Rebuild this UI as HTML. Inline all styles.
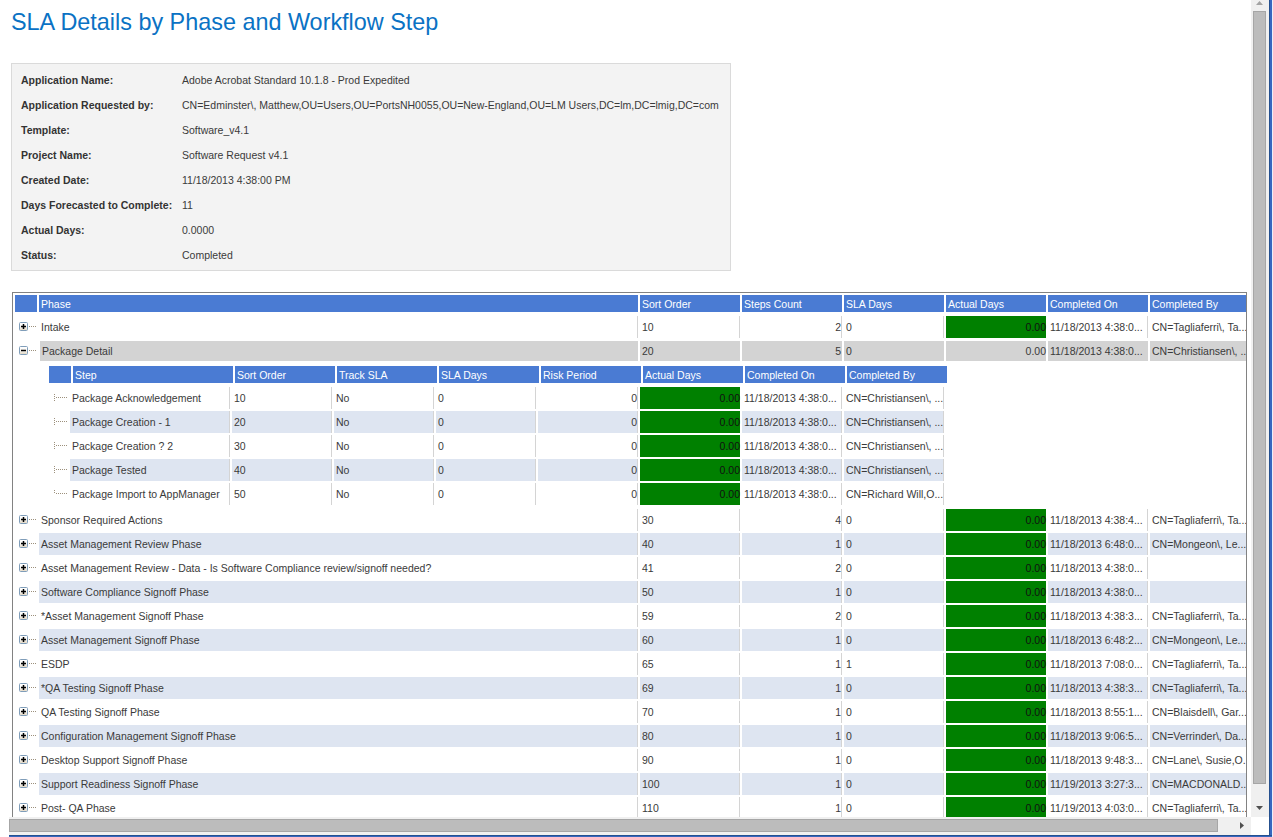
<!DOCTYPE html>
<html><head><meta charset="utf-8"><style>
html,body{margin:0;padding:0;}
body{width:1273px;height:837px;overflow:hidden;position:relative;background:#fff;font-family:'Liberation Sans',sans-serif;}
div{position:absolute;box-sizing:content-box;}
.t{white-space:nowrap;}
</style></head><body>
<div class="t" style="left:11px;top:2px;line-height:40px;font-size:23.4px;color:#0a72c4;">SLA Details by Phase and Workflow Step</div><div style="left:11px;top:63px;width:718px;height:206px;background:#f3f3f3;border:1px solid #dadada;"></div><div class="t" style="left:21px;top:70px;line-height:20px;font-size:10.5px;color:#333333;font-weight:700;">Application Name:</div><div class="t" style="left:182px;top:70px;line-height:20px;font-size:10.5px;color:#3a3a3a;">Adobe Acrobat Standard 10.1.8 - Prod Expedited</div><div class="t" style="left:21px;top:95px;line-height:20px;font-size:10.5px;color:#333333;font-weight:700;">Application Requested by:</div><div class="t" style="left:182px;top:95px;line-height:20px;font-size:10.5px;color:#3a3a3a;">CN=Edminster\, Matthew,OU=Users,OU=PortsNH0055,OU=New-England,OU=LM Users,DC=lm,DC=lmig,DC=com</div><div class="t" style="left:21px;top:120px;line-height:20px;font-size:10.5px;color:#333333;font-weight:700;">Template:</div><div class="t" style="left:182px;top:120px;line-height:20px;font-size:10.5px;color:#3a3a3a;">Software_v4.1</div><div class="t" style="left:21px;top:145px;line-height:20px;font-size:10.5px;color:#333333;font-weight:700;">Project Name:</div><div class="t" style="left:182px;top:145px;line-height:20px;font-size:10.5px;color:#3a3a3a;">Software Request v4.1</div><div class="t" style="left:21px;top:170px;line-height:20px;font-size:10.5px;color:#333333;font-weight:700;">Created Date:</div><div class="t" style="left:182px;top:170px;line-height:20px;font-size:10.5px;color:#3a3a3a;">11/18/2013 4:38:00 PM</div><div class="t" style="left:21px;top:195px;line-height:20px;font-size:10.5px;color:#333333;font-weight:700;">Days Forecasted to Complete:</div><div class="t" style="left:182px;top:195px;line-height:20px;font-size:10.5px;color:#3a3a3a;">11</div><div class="t" style="left:21px;top:220px;line-height:20px;font-size:10.5px;color:#333333;font-weight:700;">Actual Days:</div><div class="t" style="left:182px;top:220px;line-height:20px;font-size:10.5px;color:#3a3a3a;">0.0000</div><div class="t" style="left:21px;top:245px;line-height:20px;font-size:10.5px;color:#333333;font-weight:700;">Status:</div><div class="t" style="left:182px;top:245px;line-height:20px;font-size:10.5px;color:#3a3a3a;">Completed</div><div style="left:12px;top:292px;width:1235px;height:1px;background:#828282;"></div><div style="left:12px;top:292px;width:1px;height:525px;background:#828282;"></div><div style="left:1246px;top:292px;width:1px;height:525px;background:#828282;"></div><div style="left:13px;top:293px;width:1233px;height:524px;overflow:hidden;"><div style="left:-13px;top:-293px;width:1400px;height:1200px;"><div style="left:15px;top:295px;width:22px;height:17px;background:#4a7bd3;"></div><div style="left:39px;top:295px;width:599px;height:17px;background:#4a7bd3;"></div><div class="t" style="left:41px;top:294px;line-height:20px;font-size:10.5px;color:#fff;">Phase</div><div style="left:640px;top:295px;width:100px;height:17px;background:#4a7bd3;"></div><div class="t" style="left:642px;top:294px;line-height:20px;font-size:10.5px;color:#fff;">Sort Order</div><div style="left:742px;top:295px;width:100px;height:17px;background:#4a7bd3;"></div><div class="t" style="left:744px;top:294px;line-height:20px;font-size:10.5px;color:#fff;">Steps Count</div><div style="left:844px;top:295px;width:100px;height:17px;background:#4a7bd3;"></div><div class="t" style="left:846px;top:294px;line-height:20px;font-size:10.5px;color:#fff;">SLA Days</div><div style="left:946px;top:295px;width:100px;height:17px;background:#4a7bd3;"></div><div class="t" style="left:948px;top:294px;line-height:20px;font-size:10.5px;color:#fff;">Actual Days</div><div style="left:1048px;top:295px;width:100px;height:17px;background:#4a7bd3;"></div><div class="t" style="left:1050px;top:294px;line-height:20px;font-size:10.5px;color:#fff;">Completed On</div><div style="left:1150px;top:295px;width:100px;height:17px;background:#4a7bd3;"></div><div class="t" style="left:1152px;top:294px;line-height:20px;font-size:10.5px;color:#fff;">Completed By</div><div style="left:637px;top:316px;width:1px;height:22px;background:#d4d4d4;"></div><div style="left:739px;top:316px;width:1px;height:22px;background:#d4d4d4;"></div><div style="left:841px;top:316px;width:1px;height:22px;background:#d4d4d4;"></div><div style="left:943px;top:316px;width:1px;height:22px;background:#d4d4d4;"></div><div style="left:1147px;top:316px;width:1px;height:22px;background:#d4d4d4;"></div><div style="left:1249px;top:316px;width:1px;height:22px;background:#d4d4d4;"></div><div style="left:946px;top:316px;width:100px;height:22px;background:#008000;"></div><div style="left:19px;top:322px;width:7px;height:7px;border:1px solid #7f9db9;border-radius:1.5px;background:linear-gradient(#fff,#fbfaf7 45%,#e2d8c6);"><svg style="position:absolute;left:-1px;top:-1px" width="9" height="9"><rect x="2" y="3.75" width="5" height="1.5" fill="#000"/><rect x="3.75" y="2" width="1.5" height="5" fill="#000"/></svg></div><div style="left:29px;top:326px;width:1px;height:1px;background:#9c907c;"></div><div style="left:31px;top:326px;width:1px;height:1px;background:#9c907c;"></div><div style="left:33px;top:326px;width:1px;height:1px;background:#9c907c;"></div><div style="left:35px;top:326px;width:1px;height:1px;background:#9c907c;"></div><div class="t" style="left:41px;top:317px;line-height:20px;font-size:10.5px;color:#3a3a3a;">Intake</div><div class="t" style="left:642px;top:317px;line-height:20px;font-size:10.5px;color:#3a3a3a;">10</div><div class="t" style="left:781px;top:317px;width:60px;text-align:right;line-height:20px;font-size:10.5px;color:#3a3a3a;">2</div><div class="t" style="left:846px;top:317px;line-height:20px;font-size:10.5px;color:#3a3a3a;">0</div><div class="t" style="left:986px;top:317px;width:60px;text-align:right;line-height:20px;font-size:10.5px;color:#111;">0.00</div><div class="t" style="left:1050px;top:317px;line-height:20px;font-size:10.5px;color:#3a3a3a;">11/18/2013 4:38:0...</div><div class="t" style="left:1152px;top:317px;line-height:20px;font-size:10.5px;color:#3a3a3a;">CN=Tagliaferri\, Ta...</div><div style="left:40px;top:341px;width:598px;height:20px;background:#d3d3d3;"></div><div style="left:640px;top:341px;width:100px;height:20px;background:#d3d3d3;"></div><div style="left:742px;top:341px;width:100px;height:20px;background:#d3d3d3;"></div><div style="left:844px;top:341px;width:100px;height:20px;background:#d3d3d3;"></div><div style="left:946px;top:341px;width:100px;height:20px;background:#d3d3d3;"></div><div style="left:1048px;top:341px;width:100px;height:20px;background:#d3d3d3;"></div><div style="left:1150px;top:341px;width:100px;height:20px;background:#d3d3d3;"></div><div style="left:19px;top:346px;width:7px;height:7px;border:1px solid #7f9db9;border-radius:1.5px;background:linear-gradient(#fff,#fbfaf7 45%,#e2d8c6);"><svg style="position:absolute;left:-1px;top:-1px" width="9" height="9"><rect x="2" y="3.75" width="5" height="1.5" fill="#000"/></svg></div><div style="left:29px;top:350px;width:1px;height:1px;background:#9c907c;"></div><div style="left:31px;top:350px;width:1px;height:1px;background:#9c907c;"></div><div style="left:33px;top:350px;width:1px;height:1px;background:#9c907c;"></div><div style="left:35px;top:350px;width:1px;height:1px;background:#9c907c;"></div><div class="t" style="left:42px;top:341px;line-height:20px;font-size:10.5px;color:#3a3a3a;">Package Detail</div><div class="t" style="left:642px;top:341px;line-height:20px;font-size:10.5px;color:#3a3a3a;">20</div><div class="t" style="left:781px;top:341px;width:60px;text-align:right;line-height:20px;font-size:10.5px;color:#3a3a3a;">5</div><div class="t" style="left:846px;top:341px;line-height:20px;font-size:10.5px;color:#3a3a3a;">0</div><div class="t" style="left:986px;top:341px;width:60px;text-align:right;line-height:20px;font-size:10.5px;color:#3a3a3a;">0.00</div><div class="t" style="left:1050px;top:341px;line-height:20px;font-size:10.5px;color:#3a3a3a;">11/18/2013 4:38:0...</div><div class="t" style="left:1152px;top:341px;line-height:20px;font-size:10.5px;color:#3a3a3a;">CN=Christiansen\, ...</div><div style="left:49px;top:366px;width:22px;height:17px;background:#4a7bd3;"></div><div style="left:73px;top:366px;width:160px;height:17px;background:#4a7bd3;"></div><div class="t" style="left:75px;top:365px;line-height:20px;font-size:10.5px;color:#fff;">Step</div><div style="left:235px;top:366px;width:100px;height:17px;background:#4a7bd3;"></div><div class="t" style="left:237px;top:365px;line-height:20px;font-size:10.5px;color:#fff;">Sort Order</div><div style="left:337px;top:366px;width:100px;height:17px;background:#4a7bd3;"></div><div class="t" style="left:339px;top:365px;line-height:20px;font-size:10.5px;color:#fff;">Track SLA</div><div style="left:439px;top:366px;width:100px;height:17px;background:#4a7bd3;"></div><div class="t" style="left:441px;top:365px;line-height:20px;font-size:10.5px;color:#fff;">SLA Days</div><div style="left:541px;top:366px;width:100px;height:17px;background:#4a7bd3;"></div><div class="t" style="left:543px;top:365px;line-height:20px;font-size:10.5px;color:#fff;">Risk Period</div><div style="left:643px;top:366px;width:100px;height:17px;background:#4a7bd3;"></div><div class="t" style="left:645px;top:365px;line-height:20px;font-size:10.5px;color:#fff;">Actual Days</div><div style="left:745px;top:366px;width:100px;height:17px;background:#4a7bd3;"></div><div class="t" style="left:747px;top:365px;line-height:20px;font-size:10.5px;color:#fff;">Completed On</div><div style="left:847px;top:366px;width:100px;height:17px;background:#4a7bd3;"></div><div class="t" style="left:849px;top:365px;line-height:20px;font-size:10.5px;color:#fff;">Completed By</div><div style="left:229px;top:387px;width:1px;height:22px;background:#d4d4d4;"></div><div style="left:331px;top:387px;width:1px;height:22px;background:#d4d4d4;"></div><div style="left:433px;top:387px;width:1px;height:22px;background:#d4d4d4;"></div><div style="left:535px;top:387px;width:1px;height:22px;background:#d4d4d4;"></div><div style="left:637px;top:387px;width:1px;height:22px;background:#d4d4d4;"></div><div style="left:841px;top:387px;width:1px;height:22px;background:#d4d4d4;"></div><div style="left:943px;top:387px;width:1px;height:22px;background:#d4d4d4;"></div><div style="left:640px;top:387px;width:100px;height:22px;background:#008000;"></div><div style="left:54px;top:394px;width:1px;height:1px;background:#9c907c;"></div><div style="left:54px;top:396px;width:1px;height:1px;background:#9c907c;"></div><div style="left:54px;top:398px;width:1px;height:1px;background:#9c907c;"></div><div style="left:54px;top:400px;width:1px;height:1px;background:#9c907c;"></div><div style="left:56px;top:397px;width:1px;height:1px;background:#9c907c;"></div><div style="left:58px;top:397px;width:1px;height:1px;background:#9c907c;"></div><div style="left:60px;top:397px;width:1px;height:1px;background:#9c907c;"></div><div style="left:62px;top:397px;width:1px;height:1px;background:#9c907c;"></div><div style="left:64px;top:397px;width:1px;height:1px;background:#9c907c;"></div><div style="left:66px;top:397px;width:1px;height:1px;background:#9c907c;"></div><div class="t" style="left:72px;top:388px;line-height:20px;font-size:10.5px;color:#3a3a3a;">Package Acknowledgement</div><div class="t" style="left:234px;top:388px;line-height:20px;font-size:10.5px;color:#3a3a3a;">10</div><div class="t" style="left:336px;top:388px;line-height:20px;font-size:10.5px;color:#3a3a3a;">No</div><div class="t" style="left:438px;top:388px;line-height:20px;font-size:10.5px;color:#3a3a3a;">0</div><div class="t" style="left:577px;top:388px;width:60px;text-align:right;line-height:20px;font-size:10.5px;color:#3a3a3a;">0</div><div class="t" style="left:680px;top:388px;width:60px;text-align:right;line-height:20px;font-size:10.5px;color:#111;">0.00</div><div class="t" style="left:744px;top:388px;line-height:20px;font-size:10.5px;color:#3a3a3a;">11/18/2013 4:38:0...</div><div class="t" style="left:846px;top:388px;line-height:20px;font-size:10.5px;color:#3a3a3a;">CN=Christiansen\, ...</div><div style="left:70px;top:411px;width:160px;height:22px;background:#dee5f1;"></div><div style="left:232px;top:411px;width:100px;height:22px;background:#dee5f1;"></div><div style="left:334px;top:411px;width:100px;height:22px;background:#dee5f1;"></div><div style="left:436px;top:411px;width:100px;height:22px;background:#dee5f1;"></div><div style="left:538px;top:411px;width:100px;height:22px;background:#dee5f1;"></div><div style="left:640px;top:411px;width:100px;height:22px;background:#dee5f1;"></div><div style="left:742px;top:411px;width:100px;height:22px;background:#dee5f1;"></div><div style="left:844px;top:411px;width:100px;height:22px;background:#dee5f1;"></div><div style="left:229px;top:411px;width:1px;height:22px;background:#d4d4d4;"></div><div style="left:331px;top:411px;width:1px;height:22px;background:#d4d4d4;"></div><div style="left:433px;top:411px;width:1px;height:22px;background:#d4d4d4;"></div><div style="left:535px;top:411px;width:1px;height:22px;background:#d4d4d4;"></div><div style="left:637px;top:411px;width:1px;height:22px;background:#d4d4d4;"></div><div style="left:841px;top:411px;width:1px;height:22px;background:#d4d4d4;"></div><div style="left:943px;top:411px;width:1px;height:22px;background:#d4d4d4;"></div><div style="left:640px;top:411px;width:100px;height:22px;background:#008000;"></div><div style="left:54px;top:418px;width:1px;height:1px;background:#9c907c;"></div><div style="left:54px;top:420px;width:1px;height:1px;background:#9c907c;"></div><div style="left:54px;top:422px;width:1px;height:1px;background:#9c907c;"></div><div style="left:54px;top:424px;width:1px;height:1px;background:#9c907c;"></div><div style="left:56px;top:421px;width:1px;height:1px;background:#9c907c;"></div><div style="left:58px;top:421px;width:1px;height:1px;background:#9c907c;"></div><div style="left:60px;top:421px;width:1px;height:1px;background:#9c907c;"></div><div style="left:62px;top:421px;width:1px;height:1px;background:#9c907c;"></div><div style="left:64px;top:421px;width:1px;height:1px;background:#9c907c;"></div><div style="left:66px;top:421px;width:1px;height:1px;background:#9c907c;"></div><div class="t" style="left:72px;top:412px;line-height:20px;font-size:10.5px;color:#3a3a3a;">Package Creation - 1</div><div class="t" style="left:234px;top:412px;line-height:20px;font-size:10.5px;color:#3a3a3a;">20</div><div class="t" style="left:336px;top:412px;line-height:20px;font-size:10.5px;color:#3a3a3a;">No</div><div class="t" style="left:438px;top:412px;line-height:20px;font-size:10.5px;color:#3a3a3a;">0</div><div class="t" style="left:577px;top:412px;width:60px;text-align:right;line-height:20px;font-size:10.5px;color:#3a3a3a;">0</div><div class="t" style="left:680px;top:412px;width:60px;text-align:right;line-height:20px;font-size:10.5px;color:#111;">0.00</div><div class="t" style="left:744px;top:412px;line-height:20px;font-size:10.5px;color:#3a3a3a;">11/18/2013 4:38:0...</div><div class="t" style="left:846px;top:412px;line-height:20px;font-size:10.5px;color:#3a3a3a;">CN=Christiansen\, ...</div><div style="left:229px;top:435px;width:1px;height:22px;background:#d4d4d4;"></div><div style="left:331px;top:435px;width:1px;height:22px;background:#d4d4d4;"></div><div style="left:433px;top:435px;width:1px;height:22px;background:#d4d4d4;"></div><div style="left:535px;top:435px;width:1px;height:22px;background:#d4d4d4;"></div><div style="left:637px;top:435px;width:1px;height:22px;background:#d4d4d4;"></div><div style="left:841px;top:435px;width:1px;height:22px;background:#d4d4d4;"></div><div style="left:943px;top:435px;width:1px;height:22px;background:#d4d4d4;"></div><div style="left:640px;top:435px;width:100px;height:22px;background:#008000;"></div><div style="left:54px;top:442px;width:1px;height:1px;background:#9c907c;"></div><div style="left:54px;top:444px;width:1px;height:1px;background:#9c907c;"></div><div style="left:54px;top:446px;width:1px;height:1px;background:#9c907c;"></div><div style="left:54px;top:448px;width:1px;height:1px;background:#9c907c;"></div><div style="left:56px;top:445px;width:1px;height:1px;background:#9c907c;"></div><div style="left:58px;top:445px;width:1px;height:1px;background:#9c907c;"></div><div style="left:60px;top:445px;width:1px;height:1px;background:#9c907c;"></div><div style="left:62px;top:445px;width:1px;height:1px;background:#9c907c;"></div><div style="left:64px;top:445px;width:1px;height:1px;background:#9c907c;"></div><div style="left:66px;top:445px;width:1px;height:1px;background:#9c907c;"></div><div class="t" style="left:72px;top:436px;line-height:20px;font-size:10.5px;color:#3a3a3a;">Package Creation ? 2</div><div class="t" style="left:234px;top:436px;line-height:20px;font-size:10.5px;color:#3a3a3a;">30</div><div class="t" style="left:336px;top:436px;line-height:20px;font-size:10.5px;color:#3a3a3a;">No</div><div class="t" style="left:438px;top:436px;line-height:20px;font-size:10.5px;color:#3a3a3a;">0</div><div class="t" style="left:577px;top:436px;width:60px;text-align:right;line-height:20px;font-size:10.5px;color:#3a3a3a;">0</div><div class="t" style="left:680px;top:436px;width:60px;text-align:right;line-height:20px;font-size:10.5px;color:#111;">0.00</div><div class="t" style="left:744px;top:436px;line-height:20px;font-size:10.5px;color:#3a3a3a;">11/18/2013 4:38:0...</div><div class="t" style="left:846px;top:436px;line-height:20px;font-size:10.5px;color:#3a3a3a;">CN=Christiansen\, ...</div><div style="left:70px;top:459px;width:160px;height:22px;background:#dee5f1;"></div><div style="left:232px;top:459px;width:100px;height:22px;background:#dee5f1;"></div><div style="left:334px;top:459px;width:100px;height:22px;background:#dee5f1;"></div><div style="left:436px;top:459px;width:100px;height:22px;background:#dee5f1;"></div><div style="left:538px;top:459px;width:100px;height:22px;background:#dee5f1;"></div><div style="left:640px;top:459px;width:100px;height:22px;background:#dee5f1;"></div><div style="left:742px;top:459px;width:100px;height:22px;background:#dee5f1;"></div><div style="left:844px;top:459px;width:100px;height:22px;background:#dee5f1;"></div><div style="left:229px;top:459px;width:1px;height:22px;background:#d4d4d4;"></div><div style="left:331px;top:459px;width:1px;height:22px;background:#d4d4d4;"></div><div style="left:433px;top:459px;width:1px;height:22px;background:#d4d4d4;"></div><div style="left:535px;top:459px;width:1px;height:22px;background:#d4d4d4;"></div><div style="left:637px;top:459px;width:1px;height:22px;background:#d4d4d4;"></div><div style="left:841px;top:459px;width:1px;height:22px;background:#d4d4d4;"></div><div style="left:943px;top:459px;width:1px;height:22px;background:#d4d4d4;"></div><div style="left:640px;top:459px;width:100px;height:22px;background:#008000;"></div><div style="left:54px;top:466px;width:1px;height:1px;background:#9c907c;"></div><div style="left:54px;top:468px;width:1px;height:1px;background:#9c907c;"></div><div style="left:54px;top:470px;width:1px;height:1px;background:#9c907c;"></div><div style="left:54px;top:472px;width:1px;height:1px;background:#9c907c;"></div><div style="left:56px;top:469px;width:1px;height:1px;background:#9c907c;"></div><div style="left:58px;top:469px;width:1px;height:1px;background:#9c907c;"></div><div style="left:60px;top:469px;width:1px;height:1px;background:#9c907c;"></div><div style="left:62px;top:469px;width:1px;height:1px;background:#9c907c;"></div><div style="left:64px;top:469px;width:1px;height:1px;background:#9c907c;"></div><div style="left:66px;top:469px;width:1px;height:1px;background:#9c907c;"></div><div class="t" style="left:72px;top:460px;line-height:20px;font-size:10.5px;color:#3a3a3a;">Package Tested</div><div class="t" style="left:234px;top:460px;line-height:20px;font-size:10.5px;color:#3a3a3a;">40</div><div class="t" style="left:336px;top:460px;line-height:20px;font-size:10.5px;color:#3a3a3a;">No</div><div class="t" style="left:438px;top:460px;line-height:20px;font-size:10.5px;color:#3a3a3a;">0</div><div class="t" style="left:577px;top:460px;width:60px;text-align:right;line-height:20px;font-size:10.5px;color:#3a3a3a;">0</div><div class="t" style="left:680px;top:460px;width:60px;text-align:right;line-height:20px;font-size:10.5px;color:#111;">0.00</div><div class="t" style="left:744px;top:460px;line-height:20px;font-size:10.5px;color:#3a3a3a;">11/18/2013 4:38:0...</div><div class="t" style="left:846px;top:460px;line-height:20px;font-size:10.5px;color:#3a3a3a;">CN=Christiansen\, ...</div><div style="left:229px;top:483px;width:1px;height:22px;background:#d4d4d4;"></div><div style="left:331px;top:483px;width:1px;height:22px;background:#d4d4d4;"></div><div style="left:433px;top:483px;width:1px;height:22px;background:#d4d4d4;"></div><div style="left:535px;top:483px;width:1px;height:22px;background:#d4d4d4;"></div><div style="left:637px;top:483px;width:1px;height:22px;background:#d4d4d4;"></div><div style="left:841px;top:483px;width:1px;height:22px;background:#d4d4d4;"></div><div style="left:943px;top:483px;width:1px;height:22px;background:#d4d4d4;"></div><div style="left:640px;top:483px;width:100px;height:22px;background:#008000;"></div><div style="left:54px;top:490px;width:1px;height:1px;background:#9c907c;"></div><div style="left:54px;top:492px;width:1px;height:1px;background:#9c907c;"></div><div style="left:56px;top:493px;width:1px;height:1px;background:#9c907c;"></div><div style="left:58px;top:493px;width:1px;height:1px;background:#9c907c;"></div><div style="left:60px;top:493px;width:1px;height:1px;background:#9c907c;"></div><div style="left:62px;top:493px;width:1px;height:1px;background:#9c907c;"></div><div style="left:64px;top:493px;width:1px;height:1px;background:#9c907c;"></div><div style="left:66px;top:493px;width:1px;height:1px;background:#9c907c;"></div><div class="t" style="left:72px;top:484px;line-height:20px;font-size:10.5px;color:#3a3a3a;">Package Import to AppManager</div><div class="t" style="left:234px;top:484px;line-height:20px;font-size:10.5px;color:#3a3a3a;">50</div><div class="t" style="left:336px;top:484px;line-height:20px;font-size:10.5px;color:#3a3a3a;">No</div><div class="t" style="left:438px;top:484px;line-height:20px;font-size:10.5px;color:#3a3a3a;">0</div><div class="t" style="left:577px;top:484px;width:60px;text-align:right;line-height:20px;font-size:10.5px;color:#3a3a3a;">0</div><div class="t" style="left:680px;top:484px;width:60px;text-align:right;line-height:20px;font-size:10.5px;color:#111;">0.00</div><div class="t" style="left:744px;top:484px;line-height:20px;font-size:10.5px;color:#3a3a3a;">11/18/2013 4:38:0...</div><div class="t" style="left:846px;top:484px;line-height:20px;font-size:10.5px;color:#3a3a3a;">CN=Richard Will,O...</div><div style="left:637px;top:509px;width:1px;height:22px;background:#d4d4d4;"></div><div style="left:739px;top:509px;width:1px;height:22px;background:#d4d4d4;"></div><div style="left:841px;top:509px;width:1px;height:22px;background:#d4d4d4;"></div><div style="left:943px;top:509px;width:1px;height:22px;background:#d4d4d4;"></div><div style="left:1147px;top:509px;width:1px;height:22px;background:#d4d4d4;"></div><div style="left:1249px;top:509px;width:1px;height:22px;background:#d4d4d4;"></div><div style="left:946px;top:509px;width:100px;height:22px;background:#008000;"></div><div style="left:19px;top:515px;width:7px;height:7px;border:1px solid #7f9db9;border-radius:1.5px;background:linear-gradient(#fff,#fbfaf7 45%,#e2d8c6);"><svg style="position:absolute;left:-1px;top:-1px" width="9" height="9"><rect x="2" y="3.75" width="5" height="1.5" fill="#000"/><rect x="3.75" y="2" width="1.5" height="5" fill="#000"/></svg></div><div style="left:29px;top:519px;width:1px;height:1px;background:#9c907c;"></div><div style="left:31px;top:519px;width:1px;height:1px;background:#9c907c;"></div><div style="left:33px;top:519px;width:1px;height:1px;background:#9c907c;"></div><div style="left:35px;top:519px;width:1px;height:1px;background:#9c907c;"></div><div class="t" style="left:41px;top:510px;line-height:20px;font-size:10.5px;color:#3a3a3a;">Sponsor Required Actions</div><div class="t" style="left:642px;top:510px;line-height:20px;font-size:10.5px;color:#3a3a3a;">30</div><div class="t" style="left:781px;top:510px;width:60px;text-align:right;line-height:20px;font-size:10.5px;color:#3a3a3a;">4</div><div class="t" style="left:846px;top:510px;line-height:20px;font-size:10.5px;color:#3a3a3a;">0</div><div class="t" style="left:986px;top:510px;width:60px;text-align:right;line-height:20px;font-size:10.5px;color:#111;">0.00</div><div class="t" style="left:1050px;top:510px;line-height:20px;font-size:10.5px;color:#3a3a3a;">11/18/2013 4:38:4...</div><div class="t" style="left:1152px;top:510px;line-height:20px;font-size:10.5px;color:#3a3a3a;">CN=Tagliaferri\, Ta...</div><div style="left:39px;top:533px;width:599px;height:22px;background:#dee5f1;"></div><div style="left:640px;top:533px;width:100px;height:22px;background:#dee5f1;"></div><div style="left:742px;top:533px;width:100px;height:22px;background:#dee5f1;"></div><div style="left:844px;top:533px;width:100px;height:22px;background:#dee5f1;"></div><div style="left:946px;top:533px;width:100px;height:22px;background:#dee5f1;"></div><div style="left:1048px;top:533px;width:100px;height:22px;background:#dee5f1;"></div><div style="left:1150px;top:533px;width:100px;height:22px;background:#dee5f1;"></div><div style="left:637px;top:533px;width:1px;height:22px;background:#d4d4d4;"></div><div style="left:739px;top:533px;width:1px;height:22px;background:#d4d4d4;"></div><div style="left:841px;top:533px;width:1px;height:22px;background:#d4d4d4;"></div><div style="left:943px;top:533px;width:1px;height:22px;background:#d4d4d4;"></div><div style="left:1147px;top:533px;width:1px;height:22px;background:#d4d4d4;"></div><div style="left:1249px;top:533px;width:1px;height:22px;background:#d4d4d4;"></div><div style="left:946px;top:533px;width:100px;height:22px;background:#008000;"></div><div style="left:19px;top:539px;width:7px;height:7px;border:1px solid #7f9db9;border-radius:1.5px;background:linear-gradient(#fff,#fbfaf7 45%,#e2d8c6);"><svg style="position:absolute;left:-1px;top:-1px" width="9" height="9"><rect x="2" y="3.75" width="5" height="1.5" fill="#000"/><rect x="3.75" y="2" width="1.5" height="5" fill="#000"/></svg></div><div style="left:29px;top:543px;width:1px;height:1px;background:#9c907c;"></div><div style="left:31px;top:543px;width:1px;height:1px;background:#9c907c;"></div><div style="left:33px;top:543px;width:1px;height:1px;background:#9c907c;"></div><div style="left:35px;top:543px;width:1px;height:1px;background:#9c907c;"></div><div class="t" style="left:41px;top:534px;line-height:20px;font-size:10.5px;color:#3a3a3a;">Asset Management Review Phase</div><div class="t" style="left:642px;top:534px;line-height:20px;font-size:10.5px;color:#3a3a3a;">40</div><div class="t" style="left:781px;top:534px;width:60px;text-align:right;line-height:20px;font-size:10.5px;color:#3a3a3a;">1</div><div class="t" style="left:846px;top:534px;line-height:20px;font-size:10.5px;color:#3a3a3a;">0</div><div class="t" style="left:986px;top:534px;width:60px;text-align:right;line-height:20px;font-size:10.5px;color:#111;">0.00</div><div class="t" style="left:1050px;top:534px;line-height:20px;font-size:10.5px;color:#3a3a3a;">11/18/2013 6:48:0...</div><div class="t" style="left:1152px;top:534px;line-height:20px;font-size:10.5px;color:#3a3a3a;">CN=Mongeon\, Le...</div><div style="left:637px;top:557px;width:1px;height:22px;background:#d4d4d4;"></div><div style="left:739px;top:557px;width:1px;height:22px;background:#d4d4d4;"></div><div style="left:841px;top:557px;width:1px;height:22px;background:#d4d4d4;"></div><div style="left:943px;top:557px;width:1px;height:22px;background:#d4d4d4;"></div><div style="left:1147px;top:557px;width:1px;height:22px;background:#d4d4d4;"></div><div style="left:1249px;top:557px;width:1px;height:22px;background:#d4d4d4;"></div><div style="left:946px;top:557px;width:100px;height:22px;background:#008000;"></div><div style="left:19px;top:563px;width:7px;height:7px;border:1px solid #7f9db9;border-radius:1.5px;background:linear-gradient(#fff,#fbfaf7 45%,#e2d8c6);"><svg style="position:absolute;left:-1px;top:-1px" width="9" height="9"><rect x="2" y="3.75" width="5" height="1.5" fill="#000"/><rect x="3.75" y="2" width="1.5" height="5" fill="#000"/></svg></div><div style="left:29px;top:567px;width:1px;height:1px;background:#9c907c;"></div><div style="left:31px;top:567px;width:1px;height:1px;background:#9c907c;"></div><div style="left:33px;top:567px;width:1px;height:1px;background:#9c907c;"></div><div style="left:35px;top:567px;width:1px;height:1px;background:#9c907c;"></div><div class="t" style="left:41px;top:558px;line-height:20px;font-size:10.5px;color:#3a3a3a;">Asset Management Review - Data - Is Software Compliance review/signoff needed?</div><div class="t" style="left:642px;top:558px;line-height:20px;font-size:10.5px;color:#3a3a3a;">41</div><div class="t" style="left:781px;top:558px;width:60px;text-align:right;line-height:20px;font-size:10.5px;color:#3a3a3a;">2</div><div class="t" style="left:846px;top:558px;line-height:20px;font-size:10.5px;color:#3a3a3a;">0</div><div class="t" style="left:986px;top:558px;width:60px;text-align:right;line-height:20px;font-size:10.5px;color:#111;">0.00</div><div class="t" style="left:1050px;top:558px;line-height:20px;font-size:10.5px;color:#3a3a3a;">11/18/2013 4:38:0...</div><div style="left:39px;top:581px;width:599px;height:22px;background:#dee5f1;"></div><div style="left:640px;top:581px;width:100px;height:22px;background:#dee5f1;"></div><div style="left:742px;top:581px;width:100px;height:22px;background:#dee5f1;"></div><div style="left:844px;top:581px;width:100px;height:22px;background:#dee5f1;"></div><div style="left:946px;top:581px;width:100px;height:22px;background:#dee5f1;"></div><div style="left:1048px;top:581px;width:100px;height:22px;background:#dee5f1;"></div><div style="left:1150px;top:581px;width:100px;height:22px;background:#dee5f1;"></div><div style="left:637px;top:581px;width:1px;height:22px;background:#d4d4d4;"></div><div style="left:739px;top:581px;width:1px;height:22px;background:#d4d4d4;"></div><div style="left:841px;top:581px;width:1px;height:22px;background:#d4d4d4;"></div><div style="left:943px;top:581px;width:1px;height:22px;background:#d4d4d4;"></div><div style="left:1147px;top:581px;width:1px;height:22px;background:#d4d4d4;"></div><div style="left:1249px;top:581px;width:1px;height:22px;background:#d4d4d4;"></div><div style="left:946px;top:581px;width:100px;height:22px;background:#008000;"></div><div style="left:19px;top:587px;width:7px;height:7px;border:1px solid #7f9db9;border-radius:1.5px;background:linear-gradient(#fff,#fbfaf7 45%,#e2d8c6);"><svg style="position:absolute;left:-1px;top:-1px" width="9" height="9"><rect x="2" y="3.75" width="5" height="1.5" fill="#000"/><rect x="3.75" y="2" width="1.5" height="5" fill="#000"/></svg></div><div style="left:29px;top:591px;width:1px;height:1px;background:#9c907c;"></div><div style="left:31px;top:591px;width:1px;height:1px;background:#9c907c;"></div><div style="left:33px;top:591px;width:1px;height:1px;background:#9c907c;"></div><div style="left:35px;top:591px;width:1px;height:1px;background:#9c907c;"></div><div class="t" style="left:41px;top:582px;line-height:20px;font-size:10.5px;color:#3a3a3a;">Software Compliance Signoff Phase</div><div class="t" style="left:642px;top:582px;line-height:20px;font-size:10.5px;color:#3a3a3a;">50</div><div class="t" style="left:781px;top:582px;width:60px;text-align:right;line-height:20px;font-size:10.5px;color:#3a3a3a;">1</div><div class="t" style="left:846px;top:582px;line-height:20px;font-size:10.5px;color:#3a3a3a;">0</div><div class="t" style="left:986px;top:582px;width:60px;text-align:right;line-height:20px;font-size:10.5px;color:#111;">0.00</div><div class="t" style="left:1050px;top:582px;line-height:20px;font-size:10.5px;color:#3a3a3a;">11/18/2013 4:38:0...</div><div style="left:637px;top:605px;width:1px;height:22px;background:#d4d4d4;"></div><div style="left:739px;top:605px;width:1px;height:22px;background:#d4d4d4;"></div><div style="left:841px;top:605px;width:1px;height:22px;background:#d4d4d4;"></div><div style="left:943px;top:605px;width:1px;height:22px;background:#d4d4d4;"></div><div style="left:1147px;top:605px;width:1px;height:22px;background:#d4d4d4;"></div><div style="left:1249px;top:605px;width:1px;height:22px;background:#d4d4d4;"></div><div style="left:946px;top:605px;width:100px;height:22px;background:#008000;"></div><div style="left:19px;top:611px;width:7px;height:7px;border:1px solid #7f9db9;border-radius:1.5px;background:linear-gradient(#fff,#fbfaf7 45%,#e2d8c6);"><svg style="position:absolute;left:-1px;top:-1px" width="9" height="9"><rect x="2" y="3.75" width="5" height="1.5" fill="#000"/><rect x="3.75" y="2" width="1.5" height="5" fill="#000"/></svg></div><div style="left:29px;top:615px;width:1px;height:1px;background:#9c907c;"></div><div style="left:31px;top:615px;width:1px;height:1px;background:#9c907c;"></div><div style="left:33px;top:615px;width:1px;height:1px;background:#9c907c;"></div><div style="left:35px;top:615px;width:1px;height:1px;background:#9c907c;"></div><div class="t" style="left:41px;top:606px;line-height:20px;font-size:10.5px;color:#3a3a3a;">*Asset Management Signoff Phase</div><div class="t" style="left:642px;top:606px;line-height:20px;font-size:10.5px;color:#3a3a3a;">59</div><div class="t" style="left:781px;top:606px;width:60px;text-align:right;line-height:20px;font-size:10.5px;color:#3a3a3a;">2</div><div class="t" style="left:846px;top:606px;line-height:20px;font-size:10.5px;color:#3a3a3a;">0</div><div class="t" style="left:986px;top:606px;width:60px;text-align:right;line-height:20px;font-size:10.5px;color:#111;">0.00</div><div class="t" style="left:1050px;top:606px;line-height:20px;font-size:10.5px;color:#3a3a3a;">11/18/2013 4:38:3...</div><div class="t" style="left:1152px;top:606px;line-height:20px;font-size:10.5px;color:#3a3a3a;">CN=Tagliaferri\, Ta...</div><div style="left:39px;top:629px;width:599px;height:22px;background:#dee5f1;"></div><div style="left:640px;top:629px;width:100px;height:22px;background:#dee5f1;"></div><div style="left:742px;top:629px;width:100px;height:22px;background:#dee5f1;"></div><div style="left:844px;top:629px;width:100px;height:22px;background:#dee5f1;"></div><div style="left:946px;top:629px;width:100px;height:22px;background:#dee5f1;"></div><div style="left:1048px;top:629px;width:100px;height:22px;background:#dee5f1;"></div><div style="left:1150px;top:629px;width:100px;height:22px;background:#dee5f1;"></div><div style="left:637px;top:629px;width:1px;height:22px;background:#d4d4d4;"></div><div style="left:739px;top:629px;width:1px;height:22px;background:#d4d4d4;"></div><div style="left:841px;top:629px;width:1px;height:22px;background:#d4d4d4;"></div><div style="left:943px;top:629px;width:1px;height:22px;background:#d4d4d4;"></div><div style="left:1147px;top:629px;width:1px;height:22px;background:#d4d4d4;"></div><div style="left:1249px;top:629px;width:1px;height:22px;background:#d4d4d4;"></div><div style="left:946px;top:629px;width:100px;height:22px;background:#008000;"></div><div style="left:19px;top:635px;width:7px;height:7px;border:1px solid #7f9db9;border-radius:1.5px;background:linear-gradient(#fff,#fbfaf7 45%,#e2d8c6);"><svg style="position:absolute;left:-1px;top:-1px" width="9" height="9"><rect x="2" y="3.75" width="5" height="1.5" fill="#000"/><rect x="3.75" y="2" width="1.5" height="5" fill="#000"/></svg></div><div style="left:29px;top:639px;width:1px;height:1px;background:#9c907c;"></div><div style="left:31px;top:639px;width:1px;height:1px;background:#9c907c;"></div><div style="left:33px;top:639px;width:1px;height:1px;background:#9c907c;"></div><div style="left:35px;top:639px;width:1px;height:1px;background:#9c907c;"></div><div class="t" style="left:41px;top:630px;line-height:20px;font-size:10.5px;color:#3a3a3a;">Asset Management Signoff Phase</div><div class="t" style="left:642px;top:630px;line-height:20px;font-size:10.5px;color:#3a3a3a;">60</div><div class="t" style="left:781px;top:630px;width:60px;text-align:right;line-height:20px;font-size:10.5px;color:#3a3a3a;">1</div><div class="t" style="left:846px;top:630px;line-height:20px;font-size:10.5px;color:#3a3a3a;">0</div><div class="t" style="left:986px;top:630px;width:60px;text-align:right;line-height:20px;font-size:10.5px;color:#111;">0.00</div><div class="t" style="left:1050px;top:630px;line-height:20px;font-size:10.5px;color:#3a3a3a;">11/18/2013 6:48:2...</div><div class="t" style="left:1152px;top:630px;line-height:20px;font-size:10.5px;color:#3a3a3a;">CN=Mongeon\, Le...</div><div style="left:637px;top:653px;width:1px;height:22px;background:#d4d4d4;"></div><div style="left:739px;top:653px;width:1px;height:22px;background:#d4d4d4;"></div><div style="left:841px;top:653px;width:1px;height:22px;background:#d4d4d4;"></div><div style="left:943px;top:653px;width:1px;height:22px;background:#d4d4d4;"></div><div style="left:1147px;top:653px;width:1px;height:22px;background:#d4d4d4;"></div><div style="left:1249px;top:653px;width:1px;height:22px;background:#d4d4d4;"></div><div style="left:946px;top:653px;width:100px;height:22px;background:#008000;"></div><div style="left:19px;top:659px;width:7px;height:7px;border:1px solid #7f9db9;border-radius:1.5px;background:linear-gradient(#fff,#fbfaf7 45%,#e2d8c6);"><svg style="position:absolute;left:-1px;top:-1px" width="9" height="9"><rect x="2" y="3.75" width="5" height="1.5" fill="#000"/><rect x="3.75" y="2" width="1.5" height="5" fill="#000"/></svg></div><div style="left:29px;top:663px;width:1px;height:1px;background:#9c907c;"></div><div style="left:31px;top:663px;width:1px;height:1px;background:#9c907c;"></div><div style="left:33px;top:663px;width:1px;height:1px;background:#9c907c;"></div><div style="left:35px;top:663px;width:1px;height:1px;background:#9c907c;"></div><div class="t" style="left:41px;top:654px;line-height:20px;font-size:10.5px;color:#3a3a3a;">ESDP</div><div class="t" style="left:642px;top:654px;line-height:20px;font-size:10.5px;color:#3a3a3a;">65</div><div class="t" style="left:781px;top:654px;width:60px;text-align:right;line-height:20px;font-size:10.5px;color:#3a3a3a;">1</div><div class="t" style="left:846px;top:654px;line-height:20px;font-size:10.5px;color:#3a3a3a;">1</div><div class="t" style="left:986px;top:654px;width:60px;text-align:right;line-height:20px;font-size:10.5px;color:#111;">0.00</div><div class="t" style="left:1050px;top:654px;line-height:20px;font-size:10.5px;color:#3a3a3a;">11/18/2013 7:08:0...</div><div class="t" style="left:1152px;top:654px;line-height:20px;font-size:10.5px;color:#3a3a3a;">CN=Tagliaferri\, Ta...</div><div style="left:39px;top:677px;width:599px;height:22px;background:#dee5f1;"></div><div style="left:640px;top:677px;width:100px;height:22px;background:#dee5f1;"></div><div style="left:742px;top:677px;width:100px;height:22px;background:#dee5f1;"></div><div style="left:844px;top:677px;width:100px;height:22px;background:#dee5f1;"></div><div style="left:946px;top:677px;width:100px;height:22px;background:#dee5f1;"></div><div style="left:1048px;top:677px;width:100px;height:22px;background:#dee5f1;"></div><div style="left:1150px;top:677px;width:100px;height:22px;background:#dee5f1;"></div><div style="left:637px;top:677px;width:1px;height:22px;background:#d4d4d4;"></div><div style="left:739px;top:677px;width:1px;height:22px;background:#d4d4d4;"></div><div style="left:841px;top:677px;width:1px;height:22px;background:#d4d4d4;"></div><div style="left:943px;top:677px;width:1px;height:22px;background:#d4d4d4;"></div><div style="left:1147px;top:677px;width:1px;height:22px;background:#d4d4d4;"></div><div style="left:1249px;top:677px;width:1px;height:22px;background:#d4d4d4;"></div><div style="left:946px;top:677px;width:100px;height:22px;background:#008000;"></div><div style="left:19px;top:683px;width:7px;height:7px;border:1px solid #7f9db9;border-radius:1.5px;background:linear-gradient(#fff,#fbfaf7 45%,#e2d8c6);"><svg style="position:absolute;left:-1px;top:-1px" width="9" height="9"><rect x="2" y="3.75" width="5" height="1.5" fill="#000"/><rect x="3.75" y="2" width="1.5" height="5" fill="#000"/></svg></div><div style="left:29px;top:687px;width:1px;height:1px;background:#9c907c;"></div><div style="left:31px;top:687px;width:1px;height:1px;background:#9c907c;"></div><div style="left:33px;top:687px;width:1px;height:1px;background:#9c907c;"></div><div style="left:35px;top:687px;width:1px;height:1px;background:#9c907c;"></div><div class="t" style="left:41px;top:678px;line-height:20px;font-size:10.5px;color:#3a3a3a;">*QA Testing Signoff Phase</div><div class="t" style="left:642px;top:678px;line-height:20px;font-size:10.5px;color:#3a3a3a;">69</div><div class="t" style="left:781px;top:678px;width:60px;text-align:right;line-height:20px;font-size:10.5px;color:#3a3a3a;">1</div><div class="t" style="left:846px;top:678px;line-height:20px;font-size:10.5px;color:#3a3a3a;">0</div><div class="t" style="left:986px;top:678px;width:60px;text-align:right;line-height:20px;font-size:10.5px;color:#111;">0.00</div><div class="t" style="left:1050px;top:678px;line-height:20px;font-size:10.5px;color:#3a3a3a;">11/18/2013 4:38:3...</div><div class="t" style="left:1152px;top:678px;line-height:20px;font-size:10.5px;color:#3a3a3a;">CN=Tagliaferri\, Ta...</div><div style="left:637px;top:701px;width:1px;height:22px;background:#d4d4d4;"></div><div style="left:739px;top:701px;width:1px;height:22px;background:#d4d4d4;"></div><div style="left:841px;top:701px;width:1px;height:22px;background:#d4d4d4;"></div><div style="left:943px;top:701px;width:1px;height:22px;background:#d4d4d4;"></div><div style="left:1147px;top:701px;width:1px;height:22px;background:#d4d4d4;"></div><div style="left:1249px;top:701px;width:1px;height:22px;background:#d4d4d4;"></div><div style="left:946px;top:701px;width:100px;height:22px;background:#008000;"></div><div style="left:19px;top:707px;width:7px;height:7px;border:1px solid #7f9db9;border-radius:1.5px;background:linear-gradient(#fff,#fbfaf7 45%,#e2d8c6);"><svg style="position:absolute;left:-1px;top:-1px" width="9" height="9"><rect x="2" y="3.75" width="5" height="1.5" fill="#000"/><rect x="3.75" y="2" width="1.5" height="5" fill="#000"/></svg></div><div style="left:29px;top:711px;width:1px;height:1px;background:#9c907c;"></div><div style="left:31px;top:711px;width:1px;height:1px;background:#9c907c;"></div><div style="left:33px;top:711px;width:1px;height:1px;background:#9c907c;"></div><div style="left:35px;top:711px;width:1px;height:1px;background:#9c907c;"></div><div class="t" style="left:41px;top:702px;line-height:20px;font-size:10.5px;color:#3a3a3a;">QA Testing Signoff Phase</div><div class="t" style="left:642px;top:702px;line-height:20px;font-size:10.5px;color:#3a3a3a;">70</div><div class="t" style="left:781px;top:702px;width:60px;text-align:right;line-height:20px;font-size:10.5px;color:#3a3a3a;">1</div><div class="t" style="left:846px;top:702px;line-height:20px;font-size:10.5px;color:#3a3a3a;">0</div><div class="t" style="left:986px;top:702px;width:60px;text-align:right;line-height:20px;font-size:10.5px;color:#111;">0.00</div><div class="t" style="left:1050px;top:702px;line-height:20px;font-size:10.5px;color:#3a3a3a;">11/18/2013 8:55:1...</div><div class="t" style="left:1152px;top:702px;line-height:20px;font-size:10.5px;color:#3a3a3a;">CN=Blaisdell\, Gar...</div><div style="left:39px;top:725px;width:599px;height:22px;background:#dee5f1;"></div><div style="left:640px;top:725px;width:100px;height:22px;background:#dee5f1;"></div><div style="left:742px;top:725px;width:100px;height:22px;background:#dee5f1;"></div><div style="left:844px;top:725px;width:100px;height:22px;background:#dee5f1;"></div><div style="left:946px;top:725px;width:100px;height:22px;background:#dee5f1;"></div><div style="left:1048px;top:725px;width:100px;height:22px;background:#dee5f1;"></div><div style="left:1150px;top:725px;width:100px;height:22px;background:#dee5f1;"></div><div style="left:637px;top:725px;width:1px;height:22px;background:#d4d4d4;"></div><div style="left:739px;top:725px;width:1px;height:22px;background:#d4d4d4;"></div><div style="left:841px;top:725px;width:1px;height:22px;background:#d4d4d4;"></div><div style="left:943px;top:725px;width:1px;height:22px;background:#d4d4d4;"></div><div style="left:1147px;top:725px;width:1px;height:22px;background:#d4d4d4;"></div><div style="left:1249px;top:725px;width:1px;height:22px;background:#d4d4d4;"></div><div style="left:946px;top:725px;width:100px;height:22px;background:#008000;"></div><div style="left:19px;top:731px;width:7px;height:7px;border:1px solid #7f9db9;border-radius:1.5px;background:linear-gradient(#fff,#fbfaf7 45%,#e2d8c6);"><svg style="position:absolute;left:-1px;top:-1px" width="9" height="9"><rect x="2" y="3.75" width="5" height="1.5" fill="#000"/><rect x="3.75" y="2" width="1.5" height="5" fill="#000"/></svg></div><div style="left:29px;top:735px;width:1px;height:1px;background:#9c907c;"></div><div style="left:31px;top:735px;width:1px;height:1px;background:#9c907c;"></div><div style="left:33px;top:735px;width:1px;height:1px;background:#9c907c;"></div><div style="left:35px;top:735px;width:1px;height:1px;background:#9c907c;"></div><div class="t" style="left:41px;top:726px;line-height:20px;font-size:10.5px;color:#3a3a3a;">Configuration Management Signoff Phase</div><div class="t" style="left:642px;top:726px;line-height:20px;font-size:10.5px;color:#3a3a3a;">80</div><div class="t" style="left:781px;top:726px;width:60px;text-align:right;line-height:20px;font-size:10.5px;color:#3a3a3a;">1</div><div class="t" style="left:846px;top:726px;line-height:20px;font-size:10.5px;color:#3a3a3a;">0</div><div class="t" style="left:986px;top:726px;width:60px;text-align:right;line-height:20px;font-size:10.5px;color:#111;">0.00</div><div class="t" style="left:1050px;top:726px;line-height:20px;font-size:10.5px;color:#3a3a3a;">11/18/2013 9:06:5...</div><div class="t" style="left:1152px;top:726px;line-height:20px;font-size:10.5px;color:#3a3a3a;">CN=Verrinder\, Da...</div><div style="left:637px;top:749px;width:1px;height:22px;background:#d4d4d4;"></div><div style="left:739px;top:749px;width:1px;height:22px;background:#d4d4d4;"></div><div style="left:841px;top:749px;width:1px;height:22px;background:#d4d4d4;"></div><div style="left:943px;top:749px;width:1px;height:22px;background:#d4d4d4;"></div><div style="left:1147px;top:749px;width:1px;height:22px;background:#d4d4d4;"></div><div style="left:1249px;top:749px;width:1px;height:22px;background:#d4d4d4;"></div><div style="left:946px;top:749px;width:100px;height:22px;background:#008000;"></div><div style="left:19px;top:755px;width:7px;height:7px;border:1px solid #7f9db9;border-radius:1.5px;background:linear-gradient(#fff,#fbfaf7 45%,#e2d8c6);"><svg style="position:absolute;left:-1px;top:-1px" width="9" height="9"><rect x="2" y="3.75" width="5" height="1.5" fill="#000"/><rect x="3.75" y="2" width="1.5" height="5" fill="#000"/></svg></div><div style="left:29px;top:759px;width:1px;height:1px;background:#9c907c;"></div><div style="left:31px;top:759px;width:1px;height:1px;background:#9c907c;"></div><div style="left:33px;top:759px;width:1px;height:1px;background:#9c907c;"></div><div style="left:35px;top:759px;width:1px;height:1px;background:#9c907c;"></div><div class="t" style="left:41px;top:750px;line-height:20px;font-size:10.5px;color:#3a3a3a;">Desktop Support Signoff Phase</div><div class="t" style="left:642px;top:750px;line-height:20px;font-size:10.5px;color:#3a3a3a;">90</div><div class="t" style="left:781px;top:750px;width:60px;text-align:right;line-height:20px;font-size:10.5px;color:#3a3a3a;">1</div><div class="t" style="left:846px;top:750px;line-height:20px;font-size:10.5px;color:#3a3a3a;">0</div><div class="t" style="left:986px;top:750px;width:60px;text-align:right;line-height:20px;font-size:10.5px;color:#111;">0.00</div><div class="t" style="left:1050px;top:750px;line-height:20px;font-size:10.5px;color:#3a3a3a;">11/18/2013 9:48:3...</div><div class="t" style="left:1152px;top:750px;line-height:20px;font-size:10.5px;color:#3a3a3a;">CN=Lane\, Susie,O...</div><div style="left:39px;top:773px;width:599px;height:22px;background:#dee5f1;"></div><div style="left:640px;top:773px;width:100px;height:22px;background:#dee5f1;"></div><div style="left:742px;top:773px;width:100px;height:22px;background:#dee5f1;"></div><div style="left:844px;top:773px;width:100px;height:22px;background:#dee5f1;"></div><div style="left:946px;top:773px;width:100px;height:22px;background:#dee5f1;"></div><div style="left:1048px;top:773px;width:100px;height:22px;background:#dee5f1;"></div><div style="left:1150px;top:773px;width:100px;height:22px;background:#dee5f1;"></div><div style="left:637px;top:773px;width:1px;height:22px;background:#d4d4d4;"></div><div style="left:739px;top:773px;width:1px;height:22px;background:#d4d4d4;"></div><div style="left:841px;top:773px;width:1px;height:22px;background:#d4d4d4;"></div><div style="left:943px;top:773px;width:1px;height:22px;background:#d4d4d4;"></div><div style="left:1147px;top:773px;width:1px;height:22px;background:#d4d4d4;"></div><div style="left:1249px;top:773px;width:1px;height:22px;background:#d4d4d4;"></div><div style="left:946px;top:773px;width:100px;height:22px;background:#008000;"></div><div style="left:19px;top:779px;width:7px;height:7px;border:1px solid #7f9db9;border-radius:1.5px;background:linear-gradient(#fff,#fbfaf7 45%,#e2d8c6);"><svg style="position:absolute;left:-1px;top:-1px" width="9" height="9"><rect x="2" y="3.75" width="5" height="1.5" fill="#000"/><rect x="3.75" y="2" width="1.5" height="5" fill="#000"/></svg></div><div style="left:29px;top:783px;width:1px;height:1px;background:#9c907c;"></div><div style="left:31px;top:783px;width:1px;height:1px;background:#9c907c;"></div><div style="left:33px;top:783px;width:1px;height:1px;background:#9c907c;"></div><div style="left:35px;top:783px;width:1px;height:1px;background:#9c907c;"></div><div class="t" style="left:41px;top:774px;line-height:20px;font-size:10.5px;color:#3a3a3a;">Support Readiness Signoff Phase</div><div class="t" style="left:642px;top:774px;line-height:20px;font-size:10.5px;color:#3a3a3a;">100</div><div class="t" style="left:781px;top:774px;width:60px;text-align:right;line-height:20px;font-size:10.5px;color:#3a3a3a;">1</div><div class="t" style="left:846px;top:774px;line-height:20px;font-size:10.5px;color:#3a3a3a;">0</div><div class="t" style="left:986px;top:774px;width:60px;text-align:right;line-height:20px;font-size:10.5px;color:#111;">0.00</div><div class="t" style="left:1050px;top:774px;line-height:20px;font-size:10.5px;color:#3a3a3a;">11/19/2013 3:27:3...</div><div class="t" style="left:1152px;top:774px;line-height:20px;font-size:10.5px;color:#3a3a3a;">CN=MACDONALD...</div><div style="left:637px;top:797px;width:1px;height:22px;background:#d4d4d4;"></div><div style="left:739px;top:797px;width:1px;height:22px;background:#d4d4d4;"></div><div style="left:841px;top:797px;width:1px;height:22px;background:#d4d4d4;"></div><div style="left:943px;top:797px;width:1px;height:22px;background:#d4d4d4;"></div><div style="left:1147px;top:797px;width:1px;height:22px;background:#d4d4d4;"></div><div style="left:1249px;top:797px;width:1px;height:22px;background:#d4d4d4;"></div><div style="left:946px;top:797px;width:100px;height:22px;background:#008000;"></div><div style="left:19px;top:803px;width:7px;height:7px;border:1px solid #7f9db9;border-radius:1.5px;background:linear-gradient(#fff,#fbfaf7 45%,#e2d8c6);"><svg style="position:absolute;left:-1px;top:-1px" width="9" height="9"><rect x="2" y="3.75" width="5" height="1.5" fill="#000"/><rect x="3.75" y="2" width="1.5" height="5" fill="#000"/></svg></div><div style="left:29px;top:807px;width:1px;height:1px;background:#9c907c;"></div><div style="left:31px;top:807px;width:1px;height:1px;background:#9c907c;"></div><div style="left:33px;top:807px;width:1px;height:1px;background:#9c907c;"></div><div style="left:35px;top:807px;width:1px;height:1px;background:#9c907c;"></div><div class="t" style="left:41px;top:798px;line-height:20px;font-size:10.5px;color:#3a3a3a;">Post- QA Phase</div><div class="t" style="left:642px;top:798px;line-height:20px;font-size:10.5px;color:#3a3a3a;">110</div><div class="t" style="left:781px;top:798px;width:60px;text-align:right;line-height:20px;font-size:10.5px;color:#3a3a3a;">1</div><div class="t" style="left:846px;top:798px;line-height:20px;font-size:10.5px;color:#3a3a3a;">0</div><div class="t" style="left:986px;top:798px;width:60px;text-align:right;line-height:20px;font-size:10.5px;color:#111;">0.00</div><div class="t" style="left:1050px;top:798px;line-height:20px;font-size:10.5px;color:#3a3a3a;">11/19/2013 4:03:0...</div><div class="t" style="left:1152px;top:798px;line-height:20px;font-size:10.5px;color:#3a3a3a;">CN=Tagliaferri\, Ta...</div></div></div><div style="left:1251px;top:0px;width:18px;height:817px;background:#f0f0f0;"></div><div style="left:1253px;top:11px;width:11px;height:771px;background:#bcbcbc;border:1px solid #a6a6a6;"></div><svg style="position:absolute;left:1251px;top:0px" width="18" height="817"><polygon points="5,5 12,5 8.5,1" fill="#a3a3a3"/><polygon points="5,806 12,806 8.5,810" fill="#505050"/></svg><div style="left:9px;top:817px;width:1242px;height:18px;background:#f0f0f0;"></div><div style="left:9px;top:819px;width:1207px;height:11px;background:#bcbcbc;border:1px solid #a6a6a6;"></div><svg style="position:absolute;left:1230px;top:817px" width="21" height="18"><polygon points="10,5 10,12 14,8.5" fill="#505050"/></svg><div style="left:1251px;top:817px;width:18px;height:18px;background:#fff;"></div><div style="left:1269px;top:0px;width:1px;height:837px;background:#25508f;"></div><div style="left:1270px;top:0px;width:2px;height:837px;background:#3767bf;"></div><div style="left:1272px;top:0px;width:1px;height:837px;background:#e9eef8;"></div><div style="left:9px;top:835px;width:1263px;height:1px;background:#25508f;"></div><div style="left:9px;top:836px;width:1263px;height:1px;background:#3767bf;"></div>
</body></html>
